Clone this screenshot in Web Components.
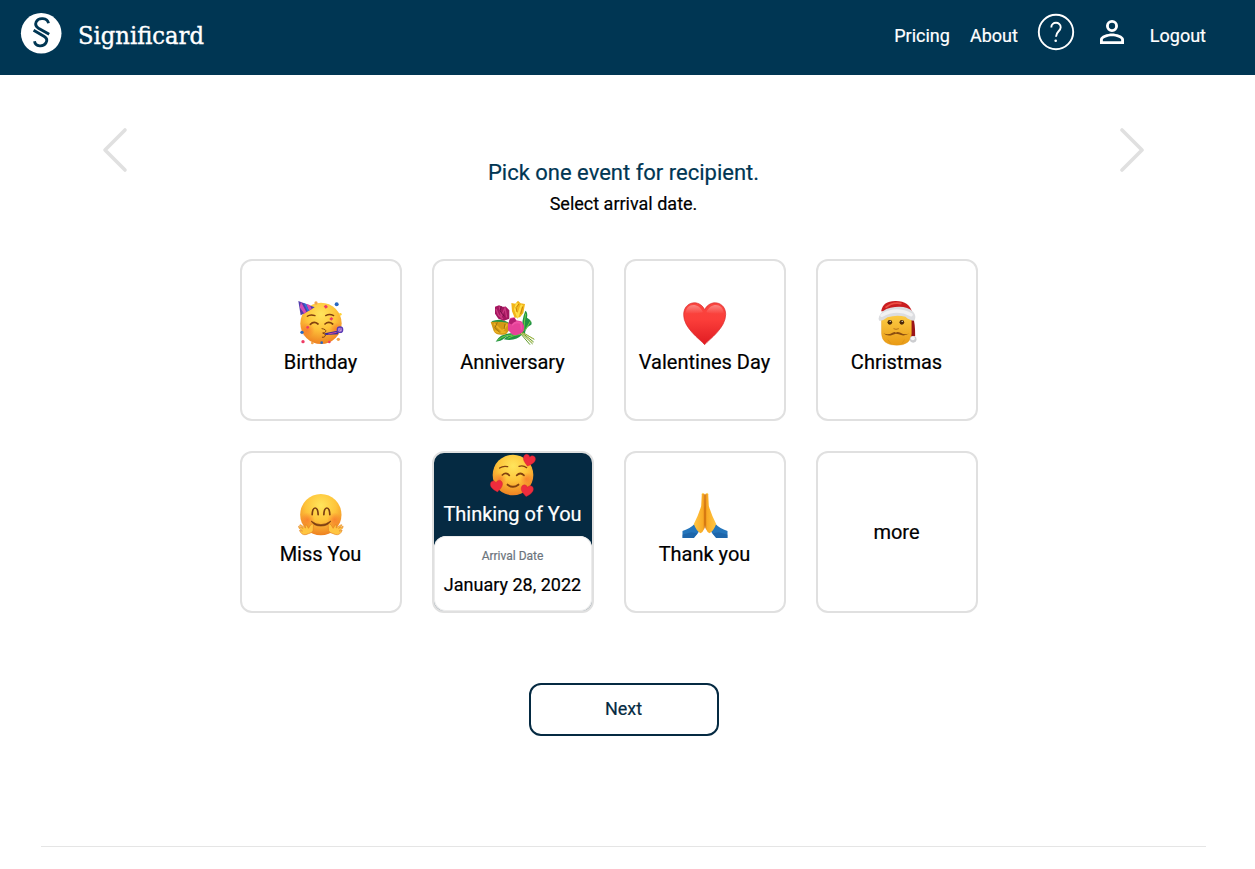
<!DOCTYPE html>
<html lang="en">
<head>
<meta charset="utf-8">
<title>Significard</title>
<style>
html,body{margin:0;height:869px;overflow:hidden;background:#fff;font-family:Roboto,"Liberation Sans",sans-serif;-webkit-text-stroke:.2px currentColor}
</style>
</head>
<body>
<significard-app></significard-app>
<script>
const define = (name, html) => customElements.define(name, class extends HTMLElement {
  constructor() {
    super();
    const t = document.createElement('template');
    t.innerHTML = html;
    this.attachShadow({mode: 'open'}).append(t.content.cloneNode(true));
  }
});

define('site-header', `
<style>
:host{display:flex;box-sizing:border-box;height:75px;background:#003653;color:#fff;padding:0 49px 0 20px;justify-content:space-between}
.brand{display:flex;padding-top:12px}
nav{display:flex;font-size:18px;line-height:22px}
span{margin-top:25px}
.help{margin:13px 0 0 19px}
.user{margin:14px 20px 0 19px}
svg{display:block}
</style>
<div class="brand">
<svg width="200" height="50" viewBox="0 0 200 50">
<circle cx="21.200" cy="21.300" r="20.300" fill="#fff"/>
<g fill="none" stroke="#003653" stroke-width="2.800">
<path d="M28.500 11.300C27.500 5.500 18.500 5.200 16.200 9.800C14.800 13 16.200 14.800 18.500 16.200L29.200 22.300"/>
<path d="M13.600 18.200L24.300 24.500C26.800 26 27.300 28.500 26 30.800C23.500 35.300 15.300 35 14.500 29.300"/>
</g>
<text x="58" y="31.700" textLength="126" lengthAdjust="spacingAndGlyphs" font-family="DejaVu Serif, serif" font-size="23.500" fill="#fff" stroke="#fff" stroke-width=".4" style="-webkit-text-stroke:.4px #fff">Significard</text>
</svg></div>
<nav><span>Pricing</span><span style="margin-left:20px">About</span>
<svg class="help" width="38" height="38" viewBox="0 0 38 38" fill="none" stroke="#fff"><circle cx="19" cy="19" r="17.200" stroke-width="1.900"/><path d="M14.300 14.500C14.300 8.200 23.700 8.400 23.700 14.200C23.700 18.300 19 18.300 19 23.700" stroke-width="1.900"/><circle cx="18.700" cy="27.700" r="1.300" fill="#fff" stroke="none"/></svg>
<svg class="user" width="36" height="36" viewBox="0 0 24 24" fill="#fff"><path d="M12 5.900a2.100 2.100 0 1 1 0 4.200 2.100 2.100 0 0 1 0-4.200m0 9c2.970 0 6.100 1.460 6.100 2.100v1.100H5.900V17c0-.64 3.130-2.100 6.100-2.100M12 4a4 4 0 1 0 0 8 4 4 0 0 0 0-8m0 9c-2.670 0-8 1.340-8 4v3h16v-3c0-2.660-5.330-4-8-4"/></svg>
<span>Logout</span></nav>`);

define('nav-arrow', `
<style>:host{display:block;width:26px;height:46px}svg{display:block}</style>
<svg width="26" height="46" viewBox="0 0 26 46"><path d="M23 3L3 23L23 43" fill="none" stroke="#e0e0e0" stroke-width="3.600" stroke-linecap="round" stroke-linejoin="round"/></svg>`);

define('event-card', `
<style>
:host{display:flex;flex-direction:column;align-items:center;box-sizing:border-box;width:162px;height:162px;border:2px solid #e0e0e0;border-radius:12px;background:#fff;color:#000;font-size:20px;line-height:24px;overflow:hidden;padding-right:1px}
::slotted(svg){display:block;margin-top:24px;width:80px;height:65px;flex:none}
:host([plain]){justify-content:center}
.label{white-space:nowrap}
</style>
<slot name="icon"></slot><div class="label"><slot></slot></div>`);

define('selected-event-card', `
<style>
:host{display:flex;flex-direction:column;align-items:center;box-sizing:border-box;width:162px;height:162px;border:2px solid #e0e0e0;border-radius:12px;background:linear-gradient(#052a42 100px,#a9b3ba 101px);color:#fff;font-size:20px;line-height:24px;overflow:hidden}
::slotted(svg){display:block;width:80px;height:49px;flex:none}
.label{white-space:nowrap;padding-right:1px}
.date{box-sizing:border-box;width:158px;height:75px;margin-top:10px;padding:12px 1px 0 0;background:#fff;border-radius:12px;text-align:center;color:#000;font-size:18px;flex:none;box-shadow:inset 0 0 0 1px #ececec}
.date small{display:block;font-size:12px;line-height:16px;color:#6c757d}
.date div{line-height:22px;margin-top:10px}
</style>
<slot name="icon"></slot><div class="label"><slot></slot></div>
<div class="date"><small>Arrival Date</small><div><slot name="date"></slot></div></div>`);

define('outline-button', `
<style>:host{display:block}button{display:block;box-sizing:border-box;width:190px;height:53px;border:2px solid #052a42;border-radius:12px;background:#fff;color:#052a42;font:18px Roboto,sans-serif;padding:0 1px 2px 0;-webkit-text-stroke:.2px currentColor}</style>
<button><slot></slot></button>`);

const defs = `<defs>
<radialGradient id="f" cx=".5" cy=".28" r=".74"><stop offset="0" stop-color="#ffe55c"/><stop offset=".5" stop-color="#fec43a"/><stop offset="1" stop-color="#ed7d20"/></radialGradient>
<radialGradient id="b"><stop offset="0" stop-color="#f9682c" stop-opacity=".6"/><stop offset="1" stop-color="#f9682c" stop-opacity="0"/></radialGradient>
<linearGradient id="r" x2="0" y2="1"><stop offset="0" stop-color="#f94640"/><stop offset=".4" stop-color="#fb3e3a"/><stop offset="1" stop-color="#e01b22"/></linearGradient>
<linearGradient id="s" x2="0" y2="1"><stop offset="0" stop-color="#ffd34c"/><stop offset="1" stop-color="#e99a14"/></linearGradient>
<linearGradient id="h" x2="1"><stop offset="0" stop-color="#ffc645"/><stop offset=".8" stop-color="#f9ab25"/><stop offset="1" stop-color="#df7d13"/></linearGradient>
<linearGradient id="w" x2="0" y2="1"><stop offset="0" stop-color="#fff" stop-opacity=".35"/><stop offset="1" stop-color="#fff" stop-opacity="0"/></linearGradient>
</defs>`;
const heart = (x, y, rot) => `<path transform="translate(${x} ${y}) rotate(${rot})" d="M0 18C-9 11-20 3-18-8C-16-18-4-19 0-10C4-19 16-18 18-8C20 3 9 11 0 18Z" fill="#ef2c3d" stroke="#c91c30" stroke-width="1"/>`;
const brown = 'fill="none" stroke="#82410f" stroke-linecap="round"';
const icon = (box, body) => `<svg slot="icon" viewBox="${box}">${defs}${body}</svg>`;
const box1 = '2 0 240 195', box2 = '1.5 -9 240 195';

const party = icon(box1, `
<circle cx="122" cy="115" r="62" fill="url(#f)"/><circle cx="80" cy="135" r="23" fill="url(#b)"/><circle cx="168" cy="133" r="20" fill="url(#b)"/>
<path d="M54 48L103 67Q83 80 61 91Z" fill="#513cad"/><path d="M62 51L58 67L72 86L78 81ZM77 56L86 77L94 72L88 60Z" fill="#d34bb6"/><path d="M70 54L82 79L86 77L77 57Z" fill="#2878da"/>
<g ${brown} stroke-width="4"><path d="M81 94Q90 87 104 92M136 92Q148 85 160 92" stroke-width="4"/><path d="M90 118Q101 107 113 117M134 117Q145 107 157 117" stroke-width="5"/><path d="M125 131Q139 133 136 140Q133 144 127 144Q138 147 135 153Q132 158 126 157" stroke-width="3"/></g>
<path d="M133 145L171 137L174 148L136 150Z" fill="#392c9b"/><path d="M144 147L169 142" stroke="#cc48a2" stroke-width="3"/><circle cx="179" cy="134" r="8" fill="#d8a5df" stroke="#583ab5" stroke-width="4"/><path d="M179 139Q172 135 178 131Q184 130 182 136" fill="none" stroke="#583ab5" stroke-width="2"/>
<g fill="#ee3b64"><path d="M137 59L143 66L136 71L130 64Z"/><path d="M153 96L159 101L153 107L147 102Z"/><circle cx="82" cy="127" r="4"/><circle cx="68" cy="170" r="5"/><circle cx="147" cy="171" r="4"/></g>
<g fill="#2868c3"><circle cx="169" cy="58" r="6"/><circle cx="65" cy="142" r="5"/><circle cx="124" cy="173" r="4"/></g><g fill="#f3a34c"><circle cx="107" cy="54" r="5"/><circle cx="174" cy="163" r="5"/><circle cx="96" cy="174" r="4"/></g><circle cx="180" cy="88" r="4" fill="#ffd337"/>`);

const flowers = icon(box1, `
<g fill="#239344"><path d="M70 170Q83 144 123 144L146 150Q112 145 96 160Q85 170 70 170Z"/><path d="M57 109Q88 96 113 116L99 134Z"/><path d="M148 143Q148 104 159 77Q167 82 164 98Q182 108 177 119Q160 126 158 145Z"/><path d="M94 163Q111 144 150 148Q131 170 94 163Z"/></g>
<path d="M154 138Q156 105 160 86M106 160Q125 149 145 148M159 135L174 109M76 166Q98 148 120 151" stroke="#6fd044" stroke-width="3" fill="none"/>
<g stroke="#609b28" stroke-width="3"><path d="M138 135L181 177M139 139L173 179M147 140L186 163M145 140L184 171"/></g><path d="M146 145L181 173M151 144L183 162" stroke="#d3cb56" stroke-width="2"/>
<path d="M68 65L80 61L91 65L101 65L111 76L111 101L95 107L78 101L68 86Z" fill="#a4175f"/><path d="M81 65L87 94L98 69L103 97M71 72L79 91L92 102" fill="none" stroke="#c93880" stroke-width="4"/><path d="M87 64L83 78L96 94" fill="none" stroke="#710d45" stroke-width="3"/>
<path d="M117 54L129 56L137 47L145 55L158 57L153 84L143 97L127 98L119 79Z" fill="#f2b61a"/><path d="M134 54L128 73L136 94L146 64L150 60" fill="none" stroke="#ffdf45" stroke-width="6"/><path d="M140 57L131 68L134 81M151 65L145 87" fill="none" stroke="#c98207" stroke-width="3"/>
<path d="M55 111Q82 109 106 113L113 132L102 147Q74 155 64 138Z" fill="#d39a17"/><path d="M65 116L90 139L105 118M67 138Q83 146 100 140" fill="none" stroke="#eeb226" stroke-width="5"/><path d="M75 112L68 128L83 143M98 117L95 132" stroke="#9c710e" stroke-width="3" fill="none"/>
<path d="M107 117L114 99L126 97L132 106L147 109Q160 122 153 139Q135 156 119 148L107 135Z" fill="#e64299"/><path d="M112 103L126 98L132 108L119 119L109 114Z" fill="#b31e70"/><path d="M119 121Q129 107 146 115L148 134" fill="none" stroke="#f052a5" stroke-width="5"/>`);

const love = icon(box1, `<path d="M121 179C105 161 57 129 58 88C59 49 105 41 121 74C137 41 184 49 184 88C184 129 137 161 121 179Z" fill="url(#r)" stroke="#d72728" stroke-width="2"/><path d="M64 85C65 52 105 52 116 82Q90 88 64 85ZM126 82C137 52 177 52 178 85Q152 90 126 82Z" fill="url(#w)"/>`);

const santa = icon('4.5 0 240 195', `
<path d="M151 62Q180 80 179 153L163 159L160 105Z" fill="#9a1519"/>
<path d="M78 88Q120 67 168 89V145Q167 181 124 181Q79 181 78 145Z" fill="url(#s)" stroke="#dd9216"/>
<path d="M77 79Q82 48 119 48Q162 47 171 85Z" fill="#c91d20"/><path d="M90 68Q111 50 138 56" fill="none" stroke="#ed5045" stroke-width="5"/>
<path d="M71 94Q78 74 105 68Q150 58 173 80Q184 93 177 107Q161 106 150 95Q123 88 96 97Q86 106 72 108Q67 102 71 94Z" fill="#dcdde0"/><path d="M79 91Q122 66 167 89" fill="none" stroke="#f2f2f3" stroke-width="10" stroke-linecap="round"/>
<circle cx="173" cy="163" r="10" fill="#cccdd0"/><circle cx="172" cy="160" r="6" fill="#f5f5f5"/>
<circle cx="103" cy="112" r="7" fill="#4b2807"/><circle cx="139" cy="112" r="7" fill="#4b2807"/><circle cx="104" cy="109" r="2" fill="#fff"/><circle cx="140" cy="109" r="2" fill="#fff"/>
<path d="M114 131Q121 135 130 131" fill="none" stroke="#b8741a" stroke-width="3"/><path d="M84 145Q98 151 111 143Q119 139 121 143Q125 139 135 143Q148 151 162 145Q146 156 130 148L121 146L112 149Q96 156 84 145Z" fill="#8a4d10"/><path d="M97 164L108 178M147 164L138 178" stroke="#d58e18" stroke-width="2"/>`);

const hand = `<path d="M84 161Q68 169 60 157L57 151L66 153L56 145L54 139L68 145L57 136L60 134L75 144L74 135L78 135L84 145Q89 134 95 131L99 135L98 151Q96 159 84 161Z" fill="#ffc541" stroke="#e48420" stroke-width="2"/>`;
const hug = icon(box2, `<circle cx="121" cy="104" r="62" fill="url(#f)"/><circle cx="81" cy="119" r="22" fill="url(#b)"/><circle cx="162" cy="119" r="22" fill="url(#b)"/>
<path d="M95 104Q96 84 104 84Q112 84 113 104M130 104Q131 84 139 84Q147 84 148 104" fill="none" stroke="#7a3d12" stroke-width="5" stroke-linecap="round"/><path d="M92 123Q121 145 151 123Q143 138 121 138Q99 138 92 123Z" fill="#7a3d12" stroke="#7a3d12" stroke-width="2"/>${hand}<g transform="translate(242) scale(-1 1)">${hand}</g>`);

const prayHalf = `<path d="M54 153Q78 146 92 130L106 151Q99 163 88 174H54Z" fill="#2475bb"/><path d="M54 164L80 157L99 160L88 174H54Z" fill="#185a9f" opacity=".55"/><path d="M121 45Q119 38 112 41L110 78Q102 105 88 132Q95 152 108 160Q122 153 122 126Z" fill="url(#h)"/><path d="M112 43Q113 38 119 41" fill="none" stroke="#ffda71" stroke-width="3"/>`;
const pray = icon(box2, `${prayHalf}<g transform="translate(243) scale(-1 1)">${prayHalf}</g><path d="M121.500 43V145" stroke="#c66b0d" stroke-width="3"/>`);

const adore = icon('143 26 240 147', `<circle cx="263" cy="92" r="61" fill="url(#f)"/><circle cx="224" cy="105" r="20" fill="url(#b)"/><circle cx="304" cy="104" r="20" fill="url(#b)"/>
<g ${brown} stroke-width="5"><path d="M223 71Q233 64 247 67M281 66Q294 62 304 70" stroke-width="4"/><path d="M231 92Q242 82 252 93M274 93Q285 82 296 93"/><path d="M247 121Q263 134 279 121" stroke-width="6"/></g>${heart(311,48,14)}${heart(214,125,-8)}${heart(305,139,9)}`);

define('significard-app', `
<style>
:host{display:flex;flex-direction:column;height:869px}
.top{display:flex;justify-content:space-between;padding:52px 110px 0 102px}
.title{text-align:center;padding-top:33px}
.title h1{margin:0;font-size:22px;line-height:26px;font-weight:400;color:#003653}
.title p{margin:7px 0 0;font-size:18px;line-height:22px;color:#000}
.grid{display:grid;grid-template-columns:repeat(4,162px);gap:30px;margin:44px 0 0 240px}
outline-button{margin:70px 0 0 529px}
hr{box-sizing:border-box;height:1px;border:0;background:#e5e5e5;margin:110px 49px 0 41px;width:1165px}
nav-arrow.next{transform:scaleX(-1)}
</style>
<site-header></site-header>
<div class="top"><nav-arrow></nav-arrow><div class="title"><h1>Pick one event for recipient.</h1><p>Select arrival date.</p></div><nav-arrow class="next"></nav-arrow></div>
<div class="grid">
<event-card>${party}Birthday</event-card><event-card>${flowers}Anniversary</event-card><event-card>${love}Valentines Day</event-card><event-card>${santa}Christmas</event-card>
<event-card>${hug}Miss You</event-card><selected-event-card>${adore}Thinking of You<span slot="date">January 28, 2022</span></selected-event-card><event-card>${pray}Thank you</event-card><event-card plain>more</event-card>
</div>
<outline-button>Next</outline-button>
<hr>`);
</script>
</body>
</html>
